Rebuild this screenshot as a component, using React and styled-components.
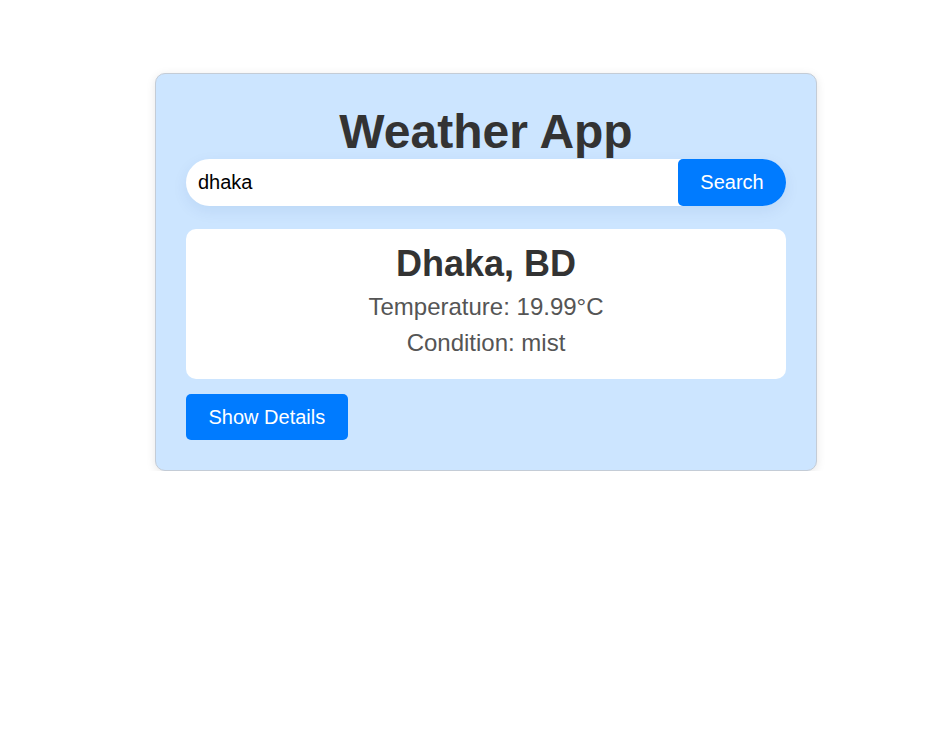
import React, { useState } from 'react';
import styled, { createGlobalStyle } from 'styled-components';

const GlobalStyle = createGlobalStyle`
  body {
    margin: 0;
    background: #fff;
    font-family: "Liberation Sans", Arial, sans-serif;
  }
`;

const Page = styled.div`
  padding: 73px 0 0 155px;
`;

const Card = styled.div`
  width: 600px;
  padding: 30px;
  background-color: #cce5ff;
  border: 1px solid #c4ccd6;
  border-radius: 10px;
  box-shadow: 0 2px 10px rgba(0, 0, 0, 0.1);
`;

const Title = styled.h1`
  margin: 0;
  font-size: 48px;
  font-weight: 700;
  color: #333;
  text-align: center;
`;

const SearchBar = styled.div`
  display: flex;
  background: #fff;
  border-radius: 25px;
  overflow: hidden;
  box-shadow: 0 5px 15px rgba(0, 60, 140, 0.08);
  margin-bottom: 23px;
`;

const Input = styled.input`
  flex: 1;
  border: none;
  outline: none;
  padding: 12px;
  font-size: 20px;
  font-family: inherit;
  color: #000;
  background: transparent;
`;

const Button = styled.button`
  border: none;
  background-color: #007bff;
  color: #fff;
  font-family: inherit;
  font-size: 20px;
  line-height: 23px;
  padding: ${p => (p.$wide ? '11.5px 22.5px' : '12px 22.3px')};
  border-radius: 5px;
  cursor: pointer;
`;

const Result = styled.div`
  background: #fff;
  border-radius: 10px;
  padding: 14px;
  text-align: center;
  margin-bottom: 15px;
`;

const City = styled.h2`
  margin: 0;
  font-size: 36px;
  font-weight: 700;
  color: #333;
`;

const Info = styled.p`
  margin: 8px 0;
  font-size: 24px;
  color: #555;
`;

export default function App() {
  const [city, setCity] = useState('dhaka');
  return (
    <>
      <GlobalStyle />
      <Page>
        <Card>
          <Title>Weather App</Title>
          <SearchBar>
            <Input value={city} onChange={e => setCity(e.target.value)} />
            <Button>Search</Button>
          </SearchBar>
          <Result>
            <City>Dhaka, BD</City>
            <Info>Temperature: 19.99°C</Info>
            <Info>Condition: mist</Info>
          </Result>
          <Button $wide>Show Details</Button>
        </Card>
      </Page>
    </>
  );
}
